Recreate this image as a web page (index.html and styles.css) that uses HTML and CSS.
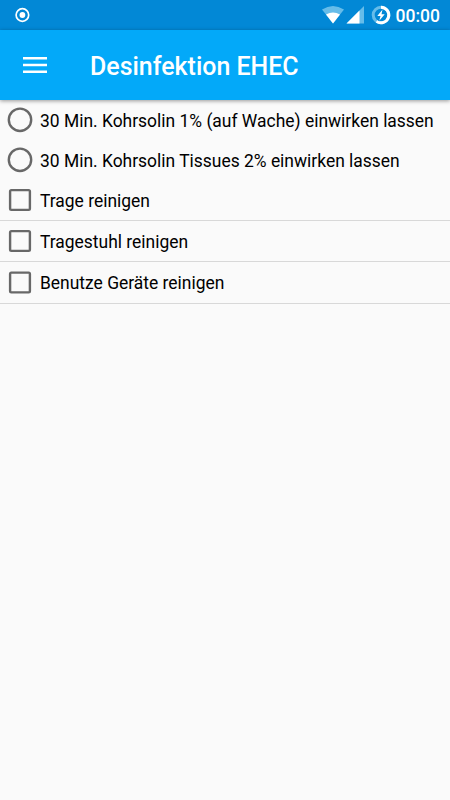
FILE: index.html
```html
<!DOCTYPE html>
<html lang="de">
<head>
<meta charset="utf-8">
<title>Desinfektion EHEC</title>
<link rel="stylesheet" href="styles.css">
</head>
<body>
<div class="status">
  <svg class="record" width="16" height="16" viewBox="0 0 16 16"><circle cx="8.400" cy="8" r="6.300" fill="none" stroke="#fff" stroke-width="1.700"/><circle cx="8.400" cy="8" r="2.900" fill="#fff"/></svg>
  <svg class="signals" width="72" height="22" viewBox="0 0 72 22">
    <path d="M1 5.500Q12-1.600 23 5.500L12 19.500Z" fill="#66bce9"/>
    <path d="M5 10.600Q12 6.200 19 10.600L12 19.500Z" fill="#fff"/>
    <path d="M43 2V19.500H25.500Z" fill="#66bce9"/>
    <path d="M38.500 6.500V19.500H25.500Z" fill="#fff"/>
    <circle cx="60" cy="11" r="7.800" fill="none" stroke="#66bce9" stroke-width="3"/>
    <path d="M60 3.200A7.800 7.800 0 1 1 55.500 17.370" fill="none" stroke="#fff" stroke-width="3"/>
    <path d="M61.500 5.500L56.300 12H59.500L58.300 16.700L63.700 10.200H60.500Z" fill="#fff"/>
  </svg>
  <span class="clock">00:00</span>
</div>
<header class="bar">
  <svg class="menu" width="24" height="18" viewBox="0 0 24 18"><path d="M0 2.300H24M0 9H24M0 15.700H24" stroke="#fff" stroke-width="2.600"/></svg>
  <h1>Desinfektion EHEC</h1>
</header>
<main>
  <label class="row"><svg class="mark" width="26" height="26" viewBox="0 0 26 26"><circle cx="13" cy="12.800" r="11.200"/></svg><span class="text">30 Min. Kohrsolin 1% (auf Wache) einwirken lassen</span></label>
  <label class="row"><svg class="mark" width="26" height="26" viewBox="0 0 26 26"><circle cx="13" cy="12.800" r="11.200"/></svg><span class="text">30 Min. Kohrsolin Tissues 2% einwirken lassen</span></label>
  <label class="row check"><svg class="mark" width="26" height="26" viewBox="0 0 26 26"><rect x="3.100" y="3.100" width="19.800" height="19.800" rx="1.300"/></svg><span class="text">Trage reinigen</span></label>
  <label class="row check"><svg class="mark" width="26" height="26" viewBox="0 0 26 26"><rect x="3.100" y="3.100" width="19.800" height="19.800" rx="1.300"/></svg><span class="text">Tragestuhl reinigen</span></label>
  <label class="row check"><svg class="mark" width="26" height="26" viewBox="0 0 26 26"><rect x="3.100" y="2.600" width="19.800" height="19.800" rx="1.300"/></svg><span class="text">Benutze Geräte reinigen</span></label>
</main>
</body>
</html>
```
FILE: styles.css
```css
* { box-sizing: border-box; }
body {
  margin: 0;
  height: 800px;
  overflow: hidden;
  background: #fafafa;
  color: #000;
  font-family: Roboto, sans-serif;
}
svg { display: block; flex: none; }
.status {
  display: flex;
  align-items: center;
  height: 30px;
  padding: 0 10px 0 14px;
  background: #0288d6;
}
.signals { margin-left: auto; }
.clock {
  margin-left: 3px;
  padding-top: 2px;
  color: #fff;
  font-size: 17.5px;
  font-weight: 500;
  line-height: 24px;
}
.bar {
  display: flex;
  align-items: center;
  height: 70px;
  padding-left: 23px;
  background: #03a9f9;
  color: #fff;
  box-shadow: 0 1px 4px rgba(0, 0, 0, .4);
}
.bar h1 {
  margin: 3px 0 0 43px;
  font-size: 24.95px;
  font-weight: 500;
  line-height: 30px;
}
.row {
  display: flex;
  align-items: center;
  height: 40px;
  padding-left: 7px;
  font-size: 17.44px;
  white-space: nowrap;
}
.check {
  height: 41px;
  border-bottom: 1px solid #d8d8d8;
}
.check:last-child { height: 42px; }
.mark {
  margin-right: 7px;
  fill: none;
  stroke: #686868;
  stroke-width: 2.4;
}
.text { padding-top: 1px; }
```
